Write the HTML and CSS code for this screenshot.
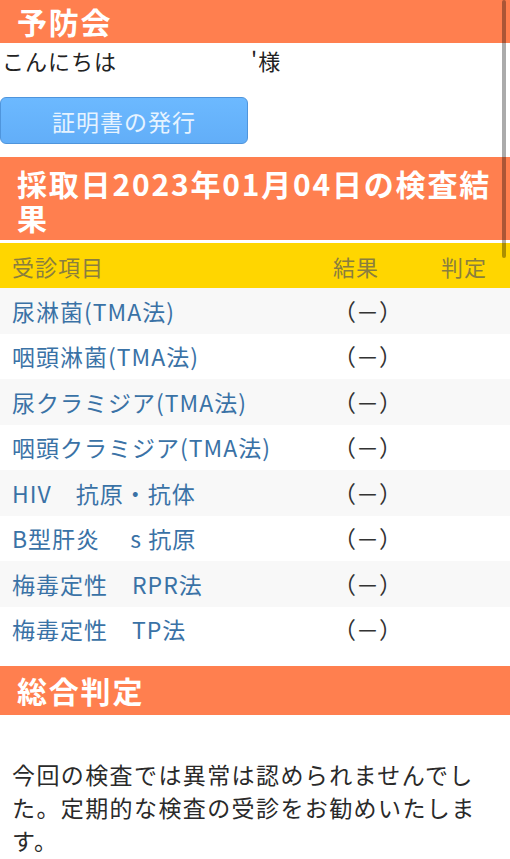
FILE: index.html
```html
<!DOCTYPE html>
<html lang="ja">
<head>
<meta charset="utf-8">
<title>予防会</title>
<link rel="stylesheet" href="styles.css">
</head>
<body>
<div class="page">
  <h1 class="bar bar-top">予防会</h1>
  <p class="greeting">こんにちは<span class="name"></span>'様</p>
  <div class="actions"><button class="btn" type="button">証明書の発行</button></div>
  <h2 class="bar bar-result">採取日2023年01月04日の検査結果</h2>
  <div class="table">
    <div class="row head"><span>受診項目</span><span>結果</span><span>判定</span></div>
    <div class="row odd"><span class="item">尿淋菌(TMA法)</span><span class="res">（－）</span><span></span></div>
    <div class="row"><span class="item">咽頭淋菌(TMA法)</span><span class="res">（－）</span><span></span></div>
    <div class="row odd"><span class="item">尿クラミジア(TMA法)</span><span class="res">（－）</span><span></span></div>
    <div class="row"><span class="item">咽頭クラミジア(TMA法)</span><span class="res">（－）</span><span></span></div>
    <div class="row odd"><span class="item">HIV　抗原・抗体</span><span class="res">（－）</span><span></span></div>
    <div class="row"><span class="item">B型肝炎　 s 抗原</span><span class="res">（－）</span><span></span></div>
    <div class="row odd"><span class="item">梅毒定性　RPR法</span><span class="res">（－）</span><span></span></div>
    <div class="row"><span class="item">梅毒定性　TP法</span><span class="res">（－）</span><span></span></div>
  </div>
  <h2 class="bar bar-total">総合判定</h2>
  <p class="summary">今回の検査では異常は認められませんでした。定期的な検査の受診をお勧めいたします。</p>
  <div class="scrollbar"></div>
</div>
</body>
</html>
```
FILE: styles.css
```css
html, body {
  margin: 0;
  padding: 0;
  background: #ffffff;
}
body {
  font-family: "Noto Sans CJK JP", "Noto Sans", sans-serif;
  color: #222222;
}
.page {
  width: 510px;
  position: relative;
}
.bar {
  margin: 0;
  background: #ff7f4f;
  color: #ffffff;
  font-weight: 700;
  font-size: 30px;
  letter-spacing: 1.8px;
  padding: 0 10px 0 17px;
}
.bar-top {
  height: 43px;
  line-height: 42px;
}
.bar-result {
  line-height: 34px;
  padding-top: 9px;
  padding-bottom: 6px;
  border-bottom: 3px solid #ffffff;
}
.bar-total {
  height: 49px;
  line-height: 48px;
  margin-top: 14px;
}
.greeting {
  margin: 0;
  padding-left: 2px;
  font-size: 22px;
  letter-spacing: 1px;
  line-height: 34px;
  color: #222222;
}
.name {
  display: inline-block;
  width: 134px;
}
.actions {
  padding: 20px 0 13px 0;
}
.btn {
  display: block;
  width: 248px;
  height: 47px;
  margin: 0;
  padding: 0;
  border: 1px solid #4f95dc;
  border-radius: 6px;
  background: linear-gradient(#6cb9ff, #62aef8);
  color: #e6f3ff;
  font-family: "Noto Sans CJK JP", "Noto Sans", sans-serif;
  font-size: 23px;
  letter-spacing: 1px;
}
.table {
  display: flex;
  flex-direction: column;
}
.row {
  display: grid;
  grid-template-columns: 321px 108px 1fr;
  padding-left: 12px;
  height: 45.5px;
  align-items: center;
  font-size: 23px;
  letter-spacing: 1px;
  background: #ffffff;
}
.row.odd {
  background: #f8f8f8;
}
.row.head {
  height: 45px;
  background: #ffd600;
  color: #8a7e3e;
  font-size: 22px;
}
.item {
  color: #3a72a6;
  white-space: nowrap;
}
.res {
  color: #333333;
  letter-spacing: 0;
}
.summary {
  margin: 0;
  padding: 43px 12px 0 12px;
  font-size: 23px;
  letter-spacing: 1.4px;
  line-height: 33px;
  color: #2a2a2a;
}
.scrollbar {
  position: absolute;
  top: 0;
  left: 502px;
  width: 4px;
  height: 258px;
  border-radius: 2px;
  background: rgba(0, 0, 0, 0.33);
}
```
